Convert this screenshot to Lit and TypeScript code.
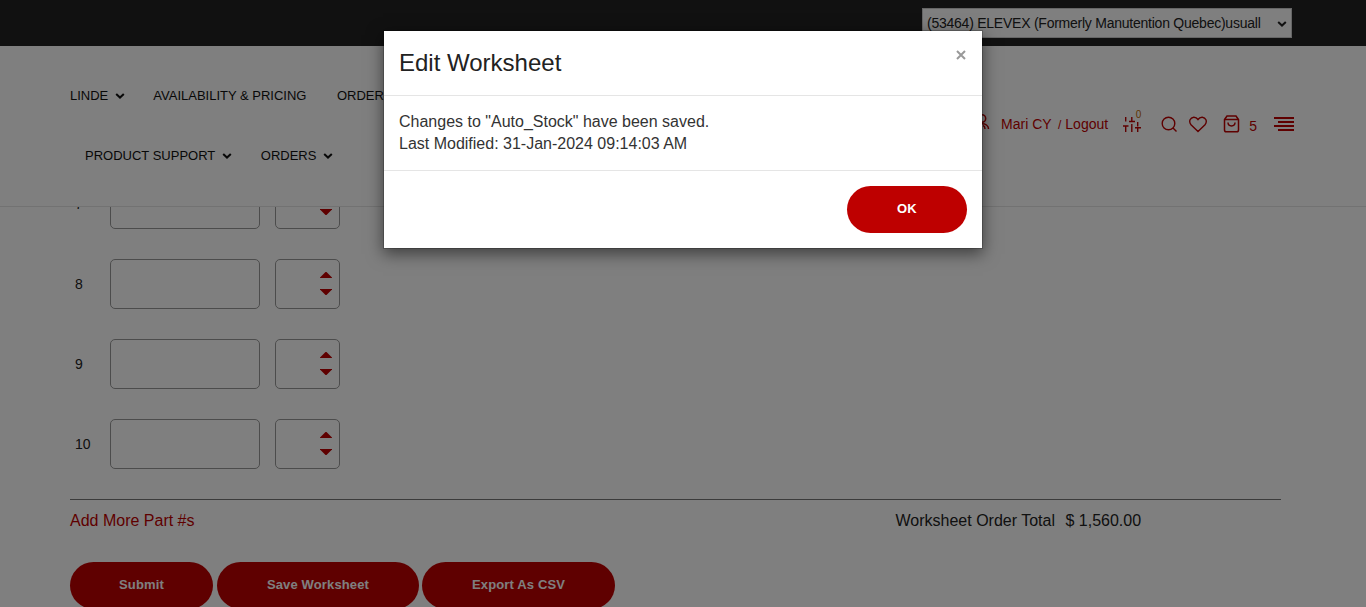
import { LitElement, html, css } from "lit";
import { customElement } from "lit/decorators.js";

const chevron = html`<svg class="chev" width="10" height="8" viewBox="0 0 10 8"><path d="M1.2 2l3.8 3.6L8.8 2" fill="none" stroke="currentColor" stroke-width="2"/></svg>`;

@customElement("app-root")
export class AppRoot extends LitElement {
  static styles = css`
    :host {
      display: block;
      position: relative;
      height: 607px;
      overflow: hidden;
      background: #fff;
      color: #222;
      font-family: "Liberation Sans", Arial, sans-serif;
      font-size: 16px;
    }
    * { box-sizing: border-box; }
    .page { display: flex; flex-direction: column; height: 607px; }
    .topbar { flex: none; height: 46px; background: #222; display: flex; justify-content: flex-end; padding: 8px 74px 0 0; }
    .account { width: 370px; height: 30px; background: #fff; border: 1px solid #ccc; display: flex; align-items: center; justify-content: space-between; padding: 0 4px 0 4px; font-size: 14px; letter-spacing: -.24px; color: #222; white-space: nowrap; }
    .header { flex: none; height: 161px; border-bottom: 1px solid #e4e4e4; display: flex; justify-content: space-between; padding: 20px 72px 0 70px; }
    .row { display: flex; height: 60px; align-items: center; gap: 30.5px; font-size: 13px; color: #111; padding-bottom: 2px; }
    .second { padding-left: 15px; gap: 31px; }
    .item { display: flex; align-items: center; gap: 7px; white-space: nowrap; }
    .chev { display: block; margin-top: 2px; }
    .item .chev { margin: 2px -2px 0 -.5px; }
    .tools { display: flex; align-items: center; height: 116px; color: #be0000; font-size: 14px; white-space: nowrap; }
    .tools svg { display: block; fill: none; stroke: currentColor; }
    .name { margin-left: 11px; }
    .logout { margin-left: 6.5px; }
    .slash { font-size: 12px; }
    .sliders { margin-left: 14.5px; }
    .zero { font-size: 10px; color: #c06a00; margin: -19px 0 0 -5px; }
    .search { margin-left: 20px; }
    .heart { margin-left: 11px; }
    .bag { margin-left: 15.5px; }
    .count { margin: 4px 0 0 9.500px; }
    .bars { margin-left: 17px; }
    .main { flex: 1; min-height: 0; overflow: hidden; padding: 0 85px 0 70px; }
    .parts { margin-top: -28px; display: grid; gap: 30px; padding-bottom: 30px; }
    .part { display: flex; height: 50px; }
    .num { width: 40px; padding: 17px 0 0 5px; font-size: 14px; line-height: 16px; }
    .field { width: 150px; border: 1px solid #999; border-radius: 5px; }
    .qty { width: 65px; margin-left: 15px; border: 1px solid #999; border-radius: 5px; padding: 12px 7px 0 0; display: flex; flex-direction: column; align-items: flex-end; gap: 11px; }
    .qty svg { display: block; fill: #be0000; }
    .total { border-top: 1px solid #777; width: 1211px; display: flex; line-height: 20px; padding-top: 11px; }
    .more { color: #be0000; width: 825.500px; }
    .amount { margin-left: 10.5px; }
    .actions { display: flex; padding-top: 31px; }
    .btn { height: 47px; border-radius: 23.5px; background: #be0000; color: #fff; font-weight: bold; font-size: 13px; letter-spacing: .14px; display: flex; align-items: center; justify-content: center; padding-bottom: 2px; white-space: nowrap; }
    .submit { width: 143px; }
    .save { width: 202px; margin: 0 3px 0 4px; }
    .export { width: 193px; }
    .backdrop { position: absolute; inset: 0; background: rgba(0, 0, 0, .5); display: flex; justify-content: center; align-items: flex-start; padding-top: 30px; }
    .modal { width: 600px; height: 219px; background: #fff; background-clip: padding-box; border: 1px solid rgba(0, 0, 0, .2); box-shadow: 0 5px 15px rgba(0, 0, 0, .5); color: #333; }
    .mhead { height: 65px; border-bottom: 1px solid #e5e5e5; display: flex; justify-content: space-between; padding: 15px 16px 0 15px; }
    .title { font-size: 24px; line-height: 34px; color: #222; }
    .close { margin-top: 4px; }
    .mbody { height: 74px; padding: 15px; line-height: 22px; }
    .mfoot { border-top: 1px solid #e5e5e5; display: flex; justify-content: flex-end; padding: 15px; }
    .ok { width: 120px; padding-bottom: 3px; }
  `;

  private part(n: number) {
    return html`<div class="part">
      <span class="num">${n}</span>
      <span class="field"></span>
      <span class="qty">
        <svg width="12" height="6" viewBox="0 0 12 6"><path d="M0 6v-.5L5.500 0h1L12 5.500V6z"/></svg>
        <svg width="12" height="6" viewBox="0 0 12 6"><path d="M0 0v.5L5.500 6h1L12 .5V0z"/></svg>
      </span>
    </div>`;
  }

  render() {
    return html`
      <div class="page">
        <div class="topbar">
          <div class="account"><span>(53464) ELEVEX (Formerly Manutention Quebec)usuall</span>${chevron}</div>
        </div>
        <div class="header">
          <div class="nav">
            <div class="row">
              <span class="item">LINDE ${chevron}</span>
              <span class="item">AVAILABILITY &amp; PRICING</span>
              <span class="item">ORDERS</span>
            </div>
            <div class="row second">
              <span class="item">PRODUCT SUPPORT ${chevron}</span>
              <span class="item">ORDERS ${chevron}</span>
            </div>
          </div>
          <div class="tools">
            <svg width="16" height="20" viewBox="0 0 16 20" stroke-width="1.5"><circle cx="8" cy="4.500" r="3.700"/><path d="M1.500 15c0-7 13-7 13 0M11 15c0-2-.6-3-2-3.500"/></svg>
            <span class="name">Mari CY</span>
            <span class="logout"><span class="slash">/</span> Logout</span>
            <svg class="sliders" width="18" height="18" viewBox="0 0 18 18" stroke-width="1.4"><path d="M2.700 2v4.500M0 11h5.500M2.700 11v6M8.800 2v4M6 6.500h6M8.800 9v8M14.700 7v4.500M12 12.700h6M14.700 12.700V17"/></svg>
            <span class="zero">0</span>
            <svg class="search" width="17" height="18" viewBox="0 0 17 18" stroke-width="1.4"><circle cx="7.500" cy="8.500" r="6.300"/><path d="M12 13l3.500 3.500"/></svg>
            <svg class="heart" width="18" height="17" viewBox="0 0 18 17" stroke-width="1.4"><path d="M9 15.500L2 8.700C-.7 5.300 1.300 1.500 4.700 1.200 6.600 1.100 8 2 9 3.500 10 2 11.400 1.100 13.300 1.200 16.700 1.500 18.700 5.300 16 8.700z"/></svg>
            <svg class="bag" width="17" height="18" viewBox="0 0 17 18" stroke-width="1.5"><path d="M1.500 4.500L4 1h9l2.500 3.500V15q0 1.800-1.800 1.800H3.300q-1.800 0-1.800-1.800zM1.500 4.500h14M5 7.500c0 4.500 7 4.500 7 0"/></svg>
            <span class="count">5</span>
            <svg class="bars" width="20" height="14" viewBox="0 0 20 14" stroke-width="2"><path d="M0 1h20M4 5h16M0 9h20M4 13h16"/></svg>
          </div>
        </div>
        <div class="main">
          <div class="parts">${[7, 8, 9, 10].map((n) => this.part(n))}</div>
          <div class="total">
            <span class="more">Add More Part #s</span>
            <span>Worksheet Order Total</span>
            <span class="amount">$ 1,560.00</span>
          </div>
          <div class="actions">
            <div class="btn submit">Submit</div>
            <div class="btn save">Save Worksheet</div>
            <div class="btn export">Export As CSV</div>
          </div>
        </div>
      </div>
      <div class="backdrop">
        <div class="modal">
          <div class="mhead">
            <span class="title">Edit Worksheet</span>
            <svg class="close" width="10" height="10" viewBox="0 0 10 10"><path d="M1 1l8 8M9 1L1 9" stroke="#999" stroke-width="2"/></svg>
          </div>
          <div class="mbody">Changes to "Auto_Stock" have been saved.<br>Last Modified: 31-Jan-2024 09:14:03 AM</div>
          <div class="mfoot"><div class="btn ok">OK</div></div>
        </div>
      </div>
    `;
  }
}
